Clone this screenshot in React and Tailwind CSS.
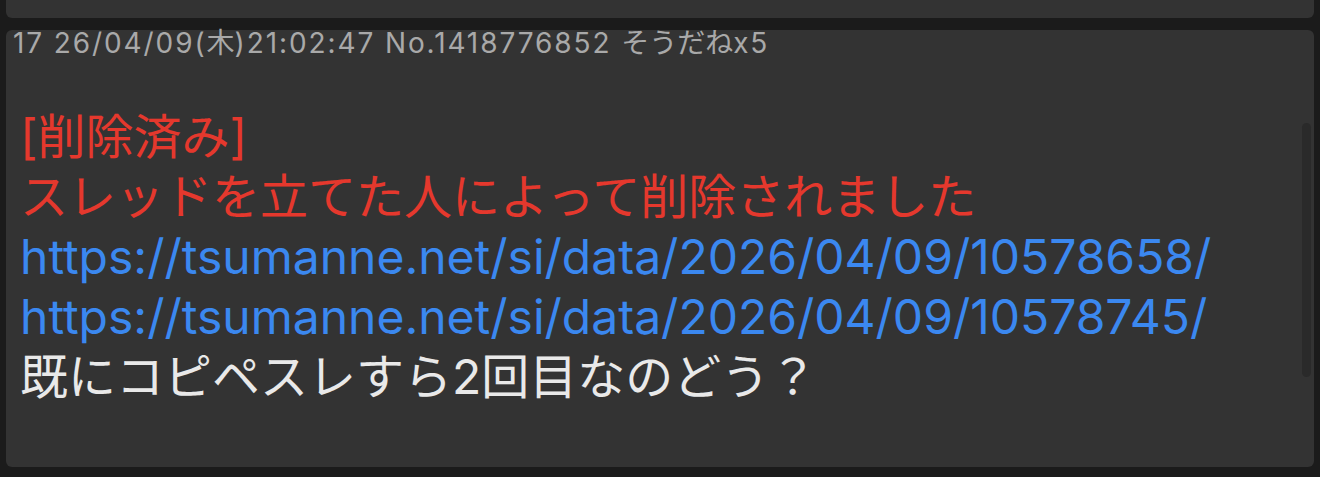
import React from 'react'

const font = { fontFamily: 'Inter, "Noto Sans CJK JP", sans-serif' }

export default function App() {
  return (
    <div className="relative h-[477px] w-[1320px] overflow-hidden bg-[#1b1b1b]" style={font}>
      <div className="-mt-[12px] flex flex-col gap-[12px] px-[6px]">
        <div className="h-[30px] rounded-[6px] bg-[#333333]" />
        <div className="relative h-[437px] rounded-[6px] bg-[#333333] pl-[7px]">
          <div className="text-[28px] leading-[26px] text-[#a9a9a9] whitespace-nowrap">
            <span className="tracking-[1.9px]">17 26/04/09(</span>
            <span>木</span>
            <span className="tracking-[1.9px]">)21:02:47 No.1418776852 </span>
            <span>そうだね</span>
            <span className="tracking-[1.9px]">x5</span>
          </div>
          <div className="mt-[51px] pl-[7px] text-[48px] leading-[60px] whitespace-nowrap">
            <div className="text-[#e5382d]">[削除済み]</div>
            <div className="text-[#e5382d]">スレッドを立てた人によって削除されました</div>
            <div className="text-[#3b88f0]">https://tsumanne.net/si/data/2026/04/09/10578658/</div>
            <div className="text-[#3b88f0]">https://tsumanne.net/si/data/2026/04/09/10578745/</div>
            <div className="text-[#e9e9e9]">既にコピペスレすら2回目なのどう？</div>
          </div>
          <div className="absolute right-[3px] top-[93px] h-[254px] w-[9px] rounded-full bg-[#2a2a2a]" />
        </div>
      </div>
    </div>
  )
}
